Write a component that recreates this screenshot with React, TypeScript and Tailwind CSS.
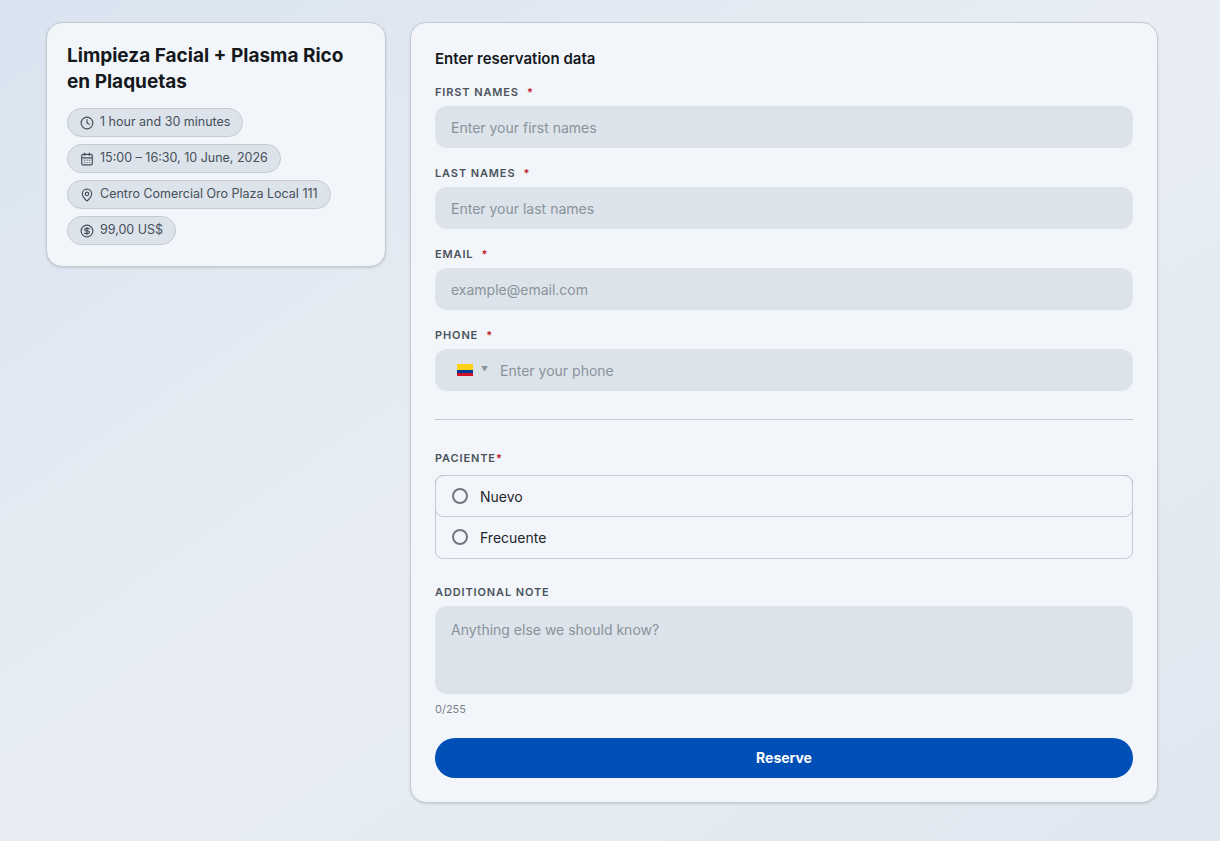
import { Clock, CalendarDays, MapPin, CircleDollarSign } from 'lucide-react';

const font = { fontFamily: 'Inter, "Open Sans", sans-serif' };

function Chip({ icon, text }: { icon: React.ReactNode; text: string }) {
  return (
    <div className="flex items-center gap-1.5 self-start h-[29px] px-3 rounded-full bg-[#dce3ea] border border-[#c3cad2] text-[12.5px] text-[#46505a]">
      {icon}
      <span>{text}</span>
    </div>
  );
}

function Label({ text, star = true }: { text: string; star?: boolean }) {
  return (
    <div className="text-[11px] font-semibold tracking-[0.08em] text-[#4b535c] uppercase h-[14px] leading-[14px]">
      {text}
      {star && <span className="text-[#c0182a] ml-2">*</span>}
    </div>
  );
}

function Field({ label, placeholder }: { label: string; placeholder: string }) {
  return (
    <div className="flex flex-col gap-[7px]">
      <Label text={label} />
      <div className="h-[42px] rounded-xl bg-[#dce3ea] px-4 flex items-center text-[14px] text-[#8a939c]">{placeholder}</div>
    </div>
  );
}

function Radio({ text, active }: { text: string; active?: boolean }) {
  return (
    <div className={`h-[42px] flex items-center gap-3 px-4 text-[14px] text-[#1f2429] ${active ? 'border border-[#c3cad2] rounded-lg -m-px' : ''}`}>
      <span className="w-[16px] h-[16px] rounded-full border-2 border-[#6f7780]" />
      {text}
    </div>
  );
}

export default function App() {
  return (
    <div className="min-h-[841px] bg-gradient-to-br from-[#d9e4f0] via-[#e9eef4] to-[#dfe7f0] flex items-start gap-6 pl-[46px] pt-[22px]" style={font}>
      <div className="w-[340px] rounded-2xl border border-[#c3cad2] bg-[#f2f6fa] px-5 pt-[20px] pb-[21px] flex flex-col gap-[7px] shadow-sm">
        <h1 className="text-[19px] leading-[26px] font-bold text-[#15191d] mb-[6px]">Limpieza Facial + Plasma Rico en Plaquetas</h1>
        <Chip icon={<Clock size={14} />} text="1 hour and 30 minutes" />
        <Chip icon={<CalendarDays size={14} />} text="15:00 – 16:30, 10 June, 2026" />
        <Chip icon={<MapPin size={14} />} text="Centro Comercial Oro Plaza Local 111" />
        <Chip icon={<CircleDollarSign size={14} />} text="99,00 US$" />
      </div>
      <div className="w-[748px] rounded-2xl border border-[#c3cad2] bg-[#f2f6fa] px-6 pt-[26px] pb-6 flex flex-col shadow-sm">
        <h2 className="text-[15px] font-semibold text-[#15191d] leading-5 mb-[16px]">Enter reservation data</h2>
        <div className="flex flex-col gap-[18px]">
          <Field label="First names" placeholder="Enter your first names" />
          <Field label="Last names" placeholder="Enter your last names" />
          <Field label="Email" placeholder="example@email.com" />
          <div className="flex flex-col gap-[7px]">
            <Label text="Phone" />
            <div className="h-[42px] rounded-xl bg-[#dce3ea] px-[22px] flex items-center gap-2 text-[14px] text-[#8a939c]">
              <span className="flex flex-col w-[16px] h-[12px]">
                <span className="h-[6px] bg-[#fcd116]" />
                <span className="h-[3px] bg-[#003893]" />
                <span className="h-[3px] bg-[#ce1126]" />
              </span>
              <span className="text-[7px] text-[#8a939c]">▼</span>
              <span className="ml-1">Enter your phone</span>
            </div>
          </div>
        </div>
        <div className="h-px bg-[#c3cad2] mt-[28px] mb-[31px]" />
        <div className="text-[11px] font-semibold tracking-[0.08em] text-[#4b535c] leading-[14px] mb-[10px]">
          PACIENTE<span className="text-[#c0182a]">*</span>
        </div>
        <div className="border border-[#c3cad2] rounded-lg flex flex-col">
          <Radio text="Nuevo" active />
          <Radio text="Frecuente" />
        </div>
        <div className="mt-[26px] flex flex-col gap-[7px]">
          <Label text="Additional note" star={false} />
          <div className="h-[88px] rounded-xl bg-[#dce3ea] px-4 py-[14px] text-[14px] text-[#8a939c] leading-5">Anything else we should know?</div>
        </div>
        <div className="text-[11px] text-[#7a838c] mt-[7px]">0/255</div>
        <button className="mt-[20px] h-[40px] rounded-full bg-[#004fb6] text-white text-[14px] font-bold">Reserve</button>
      </div>
    </div>
  );
}
